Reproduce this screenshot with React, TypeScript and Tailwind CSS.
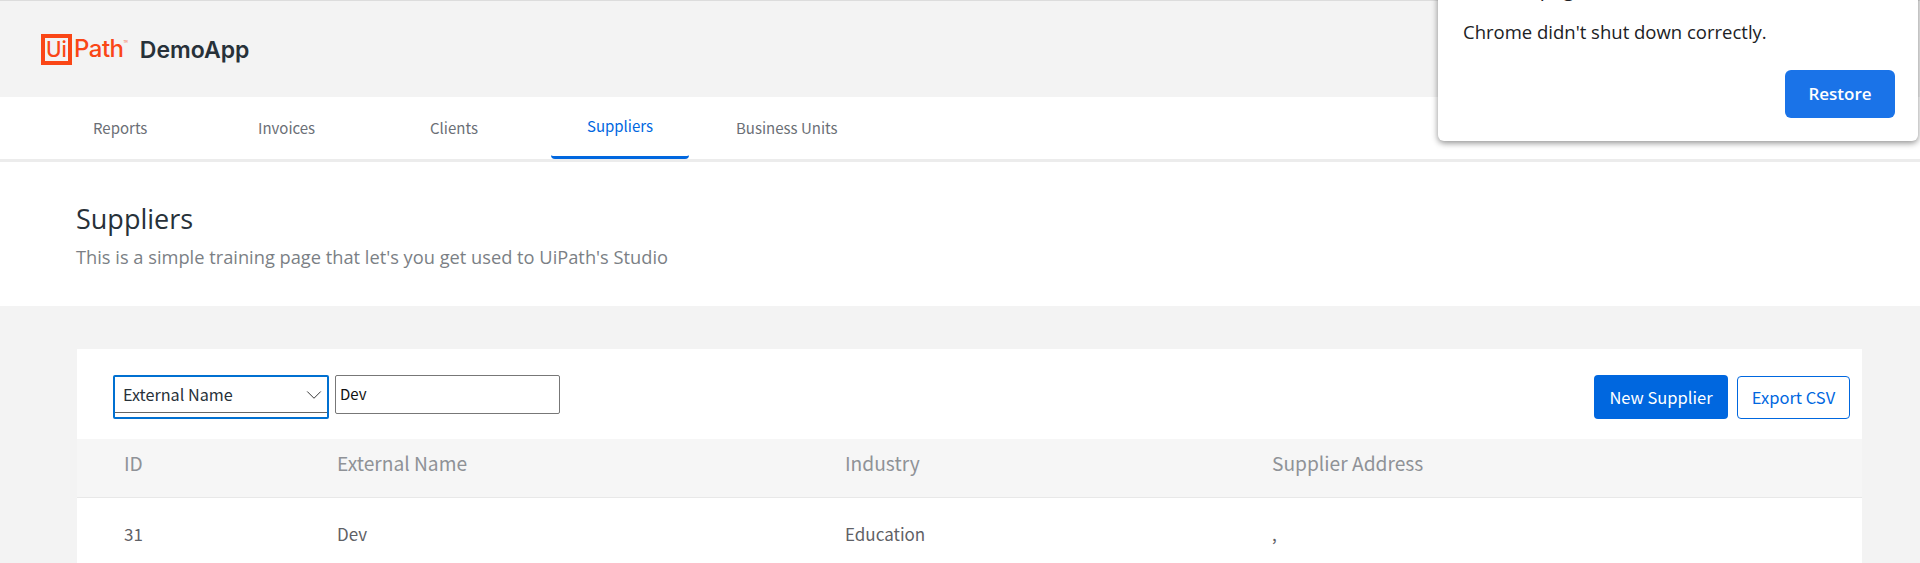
import React from 'react';
import { ChevronDown } from 'lucide-react';

const tabs = [
  { label: 'Reports', cls: 'w-[165px] pl-[37px] text-[#6b6f76]' },
  { label: 'Invoices', cls: 'w-[172px] pl-[37px] text-[#6b6f76]' },
  { label: 'Clients', cls: 'w-[158px] pl-[37px] text-[#6b6f76]' },
];

const Logo = () => (
  <div className="flex items-center text-[#fa4616]">
    <div className="w-[31px] h-[31px] border-[4px] border-[#fa4616] flex items-center justify-center text-[21px] font-medium leading-none font-['Inter',sans-serif]">
      Ui
    </div>
    <span className="ml-[2px] text-[24px] font-medium leading-none font-['Inter',sans-serif] tracking-[-0.5px]">Path</span>
    <span className="self-start mt-[7px] text-[3px] leading-none">TM</span>
  </div>
);

const RestorePopup = () => (
  <div className="absolute right-[2px] top-[-40px] w-[480px] h-[181px] bg-white rounded-b-[6px] shadow-[0_2px_6px_rgba(0,0,0,0.45)] font-['Open_Sans',sans-serif] text-[#202124]">
    <div className="absolute left-[25px] top-[17px] text-[20px] leading-6">Restore pages?</div>
    <div className="absolute left-[25px] top-[60px] text-[18.5px] leading-6">Chrome didn&apos;t shut down correctly.</div>
    <button className="absolute right-[23px] top-[110px] w-[110px] h-[48px] rounded-[6px] bg-[#1a73e8] text-white text-[17px] font-semibold">
      Restore
    </button>
  </div>
);

export default function App() {
  return (
    <div className="relative h-[563px] overflow-hidden bg-[#f3f3f3] font-['Noto_Sans_CJK_JP','Noto_Sans',sans-serif]">
      {/* header */}
      <div className="h-[97px] border-t border-[#dcdcdc] flex items-center pl-[41px] gap-[12px]">
        <Logo />
        <span className="mt-[3px] text-[23px] font-semibold text-[#273139] font-['Inter',sans-serif]">DemoApp</span>
      </div>

      {/* nav */}
      <div className="h-[65px] bg-white border-b-[3px] border-[#ececec]">
        <div className="flex h-[62px] pl-[56px] text-[15px]">
          {tabs.map((t) => (
            <div key={t.label} className={`flex items-center ${t.cls}`}>{t.label}</div>
          ))}
          <div className="w-[138px] flex items-center justify-center border-b-[3px] border-[#0067df] rounded-b-sm text-[#0067df]">Suppliers</div>
          <div className="pl-[47px] flex items-center text-[#6b6f76]">Business Units</div>
        </div>
      </div>

      {/* title */}
      <div className="h-[144px] bg-white pl-[76px] pt-[39px] font-['Open_Sans',sans-serif]">
        <div className="text-[27px] leading-[36px] text-[#273139]">Suppliers</div>
        <div className="mt-[8px] text-[18.25px] leading-[24px] text-[#7b7f85]">This is a simple training page that let&apos;s you get used to UiPath&apos;s Studio</div>
      </div>

      {/* card */}
      <div className="mt-[43px] mx-[58px] ml-[77px] bg-white h-[300px]">
        <div className="h-[90px] flex items-start pt-[26px] pl-[36px] pr-[12px]">
          <div className="w-[216px] h-[44px] border-2 border-[#0070d1] rounded-[2px] relative text-[16.2px] text-[#273139]">
            <div className="h-[36px] border-b border-[#666] flex items-center justify-between pl-[8px]">
              <span>External Name</span>
              <ChevronDown size={26} strokeWidth={0.9} className="text-[#333]" />
            </div>
          </div>
          <div className="ml-[6px] w-[225px] h-[39px] border border-[#777] rounded-[2px] flex items-center pl-[4px] text-[15px] text-[#111]">Dev</div>
          <div className="ml-auto flex gap-[9px] text-[16.5px]">
            <button className="w-[134px] h-[44px] rounded-[4px] bg-[#0067df] text-white">New Supplier</button>
            <button className="w-[113px] h-[43px] mt-[1px] rounded-[4px] border border-[#0067df] text-[#0067df]">Export CSV</button>
          </div>
        </div>

        <div className="h-[59px] pb-[10px] bg-[#f6f6f6] border-b border-[#e8e8e8] grid grid-cols-[213px_508px_427px_1fr] items-center pl-[47px] text-[19.2px] text-[#8f9297]">
          <div>ID</div>
          <div>External Name</div>
          <div>Industry</div>
          <div>Supplier Address</div>
        </div>

        <div className="h-[71px] grid grid-cols-[213px_508px_427px_1fr] items-center pl-[47px] text-[17px] text-[#5f6166]">
          <div>31</div>
          <div>Dev</div>
          <div>Education</div>
          <div>,</div>
        </div>
      </div>

      <RestorePopup />
    </div>
  );
}
